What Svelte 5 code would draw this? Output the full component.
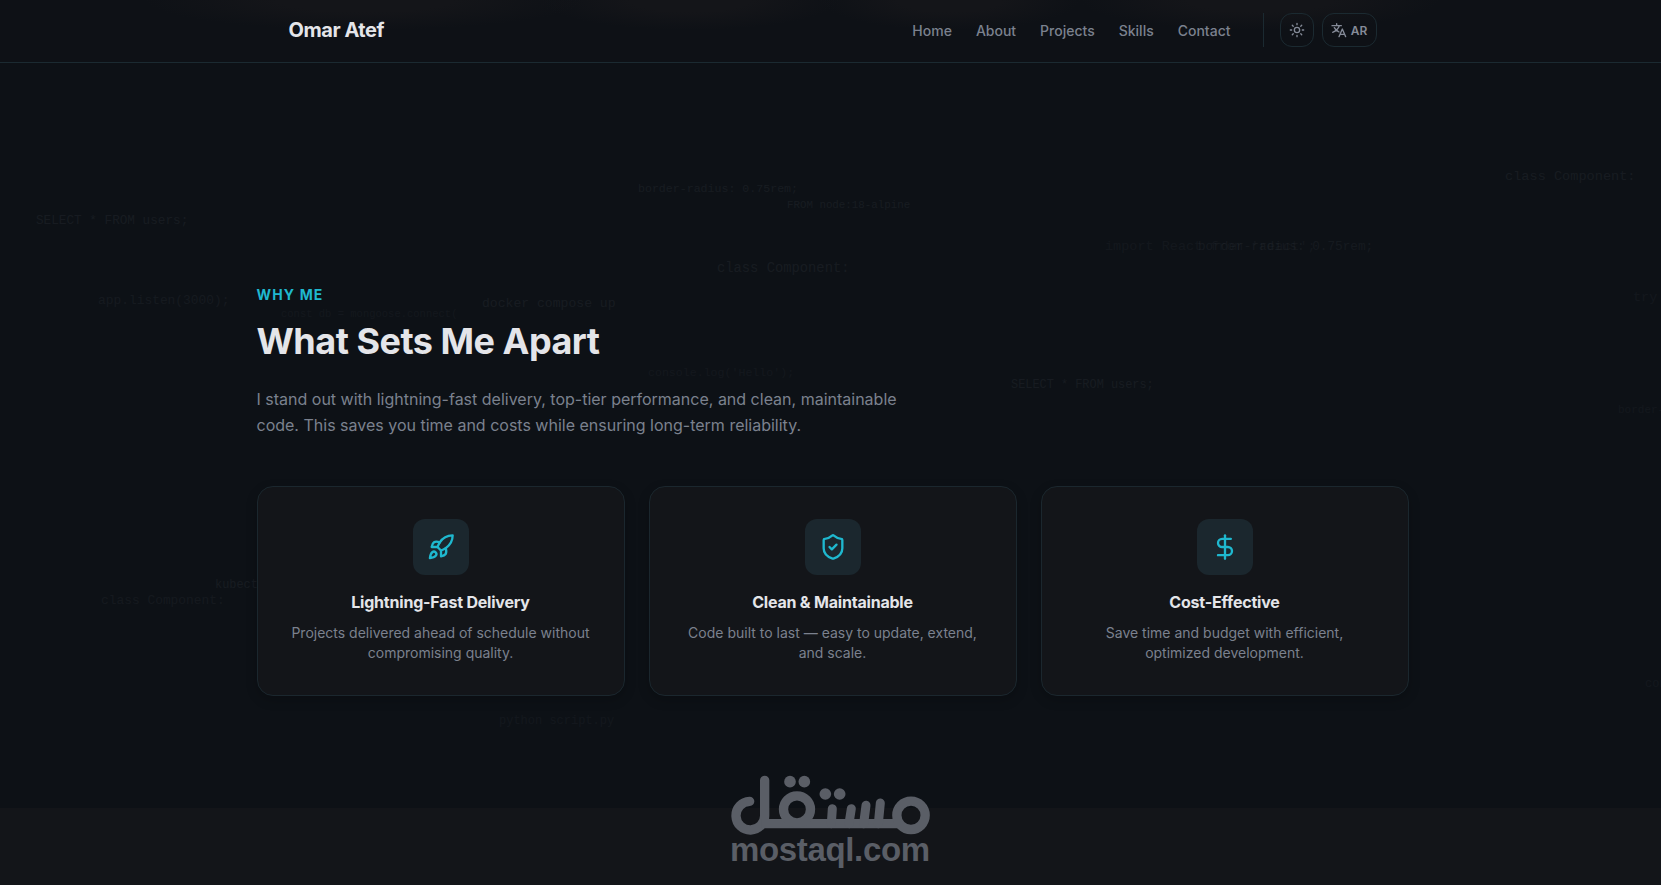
<script lang="ts">
	const links = ['Home', 'About', 'Projects', 'Skills', 'Contact'];

	const cards = [
		{
			icon: 'rocket',
			title: 'Lightning-Fast Delivery',
			text: 'Projects delivered ahead of schedule without compromising quality.'
		},
		{
			icon: 'shield',
			title: 'Clean & Maintainable',
			text: 'Code built to last — easy to update, extend, and scale.'
		},
		{
			icon: 'dollar',
			title: 'Cost-Effective',
			text: 'Save time and budget with efficient, optimized development.'
		}
	];

	// floating code snippets: x, y (middle of the line), font size, opacity
	const snippets = [
		{ code: 'SELECT * FROM users;', x: 36, y: 220, size: 12.7, o: 0.07 },
		{ code: 'app.listen(3000);', x: 98, y: 300, size: 12.9, o: 0.06 },
		{ code: 'const db = mongoose.connect(', x: 281, y: 314, size: 10.5, o: 0.045 },
		{ code: 'docker compose up', x: 482, y: 303, size: 13.1, o: 0.07 },
		{ code: 'border-radius: 0.75rem;', x: 638, y: 188, size: 11.6, o: 0.07 },
		{ code: 'FROM node:18-alpine', x: 787, y: 205, size: 10.8, o: 0.07 },
		{ code: 'class Component:', x: 717, y: 268, size: 13.8, o: 0.07 },
		{ code: "console.log('Hello');", x: 648, y: 372, size: 11.6, o: 0.045 },
		{ code: 'class Component:', x: 1505, y: 176, size: 13.6, o: 0.07 },
		{ code: "import React from 'react';", x: 1105, y: 246, size: 13.5, o: 0.045 },
		{ code: 'border-radius: 0.75rem;', x: 1198, y: 246, size: 12.7, o: 0.06 },
		{ code: 'try {', x: 1633, y: 297, size: 13.5, o: 0.045 },
		{ code: 'SELECT * FROM users;', x: 1011, y: 385, size: 11.9, o: 0.07 },
		{ code: 'border-radius: 0.75rem;', x: 1618, y: 410, size: 11, o: 0.045 },
		{ code: 'kubectl get pods', x: 215, y: 585, size: 11.9, o: 0.07 },
		{ code: 'class Component:', x: 101, y: 600, size: 12.9, o: 0.055 },
		{ code: 'python script.py', x: 499, y: 721, size: 12, o: 0.045 },
		{ code: 'console.log', x: 1645, y: 684, size: 12, o: 0.045 }
	];
</script>

<div class="page">
	<div class="code-bg" aria-hidden="true">
		{#each snippets as s}
			<span style="left:{s.x}px; top:{s.y}px; font-size:{s.size}px; opacity:{s.o}">{s.code}</span>
		{/each}
	</div>

	<header>
		<div class="container nav">
			<a class="brand" href="#top">Omar Atef</a>
			<nav>
				{#each links as link}
					<a href="#{link.toLowerCase()}">{link}</a>
				{/each}
				<div class="tools">
					<button class="theme" aria-label="Toggle theme">
						<svg viewBox="0 0 24 24" width="16" height="16">
							<circle cx="12" cy="12" r="4" />
							<path d="M12 2v2M12 20v2M4.93 4.93l1.41 1.41M17.66 17.66l1.41 1.41M2 12h2M20 12h2M6.34 17.66l-1.41 1.41M19.07 4.93l-1.41 1.41" />
						</svg>
					</button>
					<button class="lang">
						<svg viewBox="0 0 24 24" width="16" height="16">
							<path d="M1.5 5.5h14M8.5 2.5v3M12.5 5.5C11 10 7 13.5 2.5 15.5M5 8.5c1.5 3 4 5 7 6.5M12 22l5-11.5L22 22M13.7 18.5h6.6" />
						</svg>
						AR
					</button>
				</div>
			</nav>
		</div>
	</header>

	<main>
		<section class="container why">
			<p class="eyebrow">WHY ME</p>
			<h2>What Sets Me Apart</h2>
			<p class="lead">
				I stand out with lightning-fast delivery, top-tier performance, and clean, maintainable code.
				This saves you time and costs while ensuring long-term reliability.
			</p>
			<div class="cards">
				{#each cards as card}
					<article>
						<div class="icon">
							<svg viewBox="0 0 24 24" width="28" height="28">
								{#if card.icon == 'rocket'}
									<path d="M4.5 16.5c-1.5 1.26-2 5-2 5s3.74-.5 5-2c.71-.84.7-2.13-.09-2.91a2.18 2.18 0 0 0-2.91-.09z" />
									<path d="m12 15-3-3a22 22 0 0 1 2-3.95A12.88 12.88 0 0 1 22 2c0 2.72-.78 7.5-6 11a22.35 22.35 0 0 1-4 2z" />
									<path d="M9 12H4s.55-3.03 2-4c1.62-1.08 5 0 5 0" />
									<path d="M12 15v5s3.03-.55 4-2c1.08-1.62 0-5 0-5" />
								{:else if card.icon == 'shield'}
									<path d="M20 13c0 5-3.5 7.5-7.66 8.95a1 1 0 0 1-.67-.01C7.5 20.5 4 18 4 13V6a1 1 0 0 1 1-1c2 0 4.5-1.2 6.24-2.72a1.17 1.17 0 0 1 1.52 0C14.51 3.81 17 5 19 5a1 1 0 0 1 1 1z" />
									<path d="m9 12 2 2 4-4" />
								{:else}
									<path d="M12 2v20" />
									<path d="M17 5H9.5a3.5 3.5 0 0 0 0 7h5a3.5 3.5 0 0 1 0 7H6" />
								{/if}
							</svg>
						</div>
						<h3>{card.title}</h3>
						<p>{card.text}</p>
					</article>
				{/each}
			</div>
		</section>
		<section class="next"></section>
	</main>

	<div class="watermark">
		<svg viewBox="93 73 600 180" width="200" height="60" aria-label="مستقل">
			<path d="M149 152A43 43 0 1 0 194 194V89" />
			<path class="base" d="M185 219H603" />
			<circle cx="633" cy="194" r="42.5" />
			<circle cx="291" cy="176" r="40.5" />
			<path class="teeth" d="M394 219L397 174M447 219L454 174M491 219L498 164M535 219L541 157" />
			<g class="dots">
				<circle cx="270" cy="93" r="17.5" />
				<circle cx="313" cy="93" r="17.5" />
				<circle cx="376" cy="130" r="17.5" />
				<circle cx="419" cy="130" r="17.5" />
			</g>
		</svg>
		<span>mostaql.com</span>
	</div>
</div>

<style>
	:global(body) {
		margin: 0;
		background: #0d1116;
		overflow: hidden;
	}
	* {
		box-sizing: border-box;
	}
	.page {
		position: relative;
		width: calc(100% + 4px);
		height: 885px;
		display: flex;
		flex-direction: column;
		overflow: hidden;
		font-family: Inter, "Liberation Sans", sans-serif;
		color: #e4e5e9;
	}
	.code-bg {
		position: absolute;
		inset: 0;
	}
	.code-bg span {
		position: absolute;
		transform: translateY(-50%);
		font-family: "Liberation Mono", monospace;
		white-space: pre;
		color: #9ca3af;
	}
	.container {
		width: 1152px;
		margin: 0 auto;
	}
	header {
		position: relative;
		flex: none;
		height: 63px;
		border-bottom: 1px solid #1b2a31;
		background:
			radial-gradient(ellipse 220px 30px at 365px 0, #141519 40%, transparent),
			radial-gradient(ellipse 150px 30px at 690px 0, #141519 40%, transparent),
			radial-gradient(ellipse 130px 30px at 950px 0, #141519 40%, transparent),
			radial-gradient(ellipse 180px 30px at 1260px 0, #141519 40%, transparent),
			#0e1116;
	}
	.nav {
		height: 60px;
		padding: 0 32px;
		display: flex;
		align-items: center;
		justify-content: space-between;
	}
	a {
		color: inherit;
		text-decoration: none;
	}
	.brand {
		font-size: 20px;
		font-weight: 700;
		letter-spacing: -0.45px;
	}
	nav {
		display: flex;
		align-items: center;
		gap: 24px;
		font-size: 14px;
		font-weight: 500;
		color: #7b818e;
	}
	.tools {
		display: flex;
		gap: 8px;
		margin-left: 8px;
		padding-left: 16px;
		border-left: 1px solid #1b2a31;
	}
	button {
		display: flex;
		align-items: center;
		justify-content: center;
		gap: 4px;
		height: 34px;
		padding: 0;
		border: 1px solid #1b2a31;
		border-radius: 12px;
		background: none;
		color: #858b98;
		font: 600 12px Inter, sans-serif;
	}
	.theme {
		width: 34px;
	}
	.lang {
		width: 55px;
	}
	svg {
		fill: none;
		stroke: currentColor;
		stroke-width: 2;
		stroke-linecap: round;
		stroke-linejoin: round;
	}
	main {
		position: relative;
		flex: 1;
		display: flex;
		flex-direction: column;
	}
	.why {
		padding: 222px 0 112px;
	}
	.eyebrow {
		margin: 0 0 14px;
		font-size: 14px;
		line-height: 20px;
		font-weight: 700;
		letter-spacing: 1.15px;
		color: #1fb8cf;
	}
	h2 {
		margin: 0 0 22px;
		font-size: 36px;
		line-height: 45px;
		font-weight: 700;
		letter-spacing: -0.5px;
	}
	.lead {
		margin: 0 0 48px;
		width: 672px;
		font-size: 16px;
		line-height: 26px;
		color: #7b818e;
	}
	.cards {
		display: grid;
		grid-template-columns: repeat(3, 1fr);
		gap: 24px;
	}
	article {
		height: 210px;
		padding: 32px;
		border: 1px solid #1b272e;
		border-radius: 16px;
		background: #131519;
		box-shadow: 0 4px 12px rgba(0, 0, 0, 0.2);
		text-align: center;
	}
	.icon {
		display: flex;
		align-items: center;
		justify-content: center;
		width: 56px;
		height: 56px;
		margin: 0 auto 15px;
		border-radius: 12px;
		background: #1b272e;
		color: #1fb8cf;
	}
	h3 {
		margin: 0 0 9px;
		font-size: 16px;
		line-height: 24px;
		font-weight: 700;
		letter-spacing: -0.2px;
	}
	article p {
		margin: 0;
		font-size: 14px;
		line-height: 20px;
		color: #7b818e;
	}
	.next {
		flex: 1;
		background: #131519;
	}
	.watermark {
		position: absolute;
		left: 731px;
		top: 775px;
		width: 200px;
		display: flex;
		flex-direction: column;
		color: #5a5e66;
	}
	.watermark svg {
		display: block;
		stroke-width: 28;
	}
	.watermark .base {
		stroke-linecap: butt;
	}
	.watermark .teeth {
		stroke-width: 27;
	}
	.watermark .dots {
		fill: currentColor;
		stroke: none;
	}
	.watermark span {
		margin-top: -3px;
		margin-left: -1px;
		font: 700 33px/36px "Liberation Sans", Arial, sans-serif;
		letter-spacing: -0.35px;
	}
</style>
